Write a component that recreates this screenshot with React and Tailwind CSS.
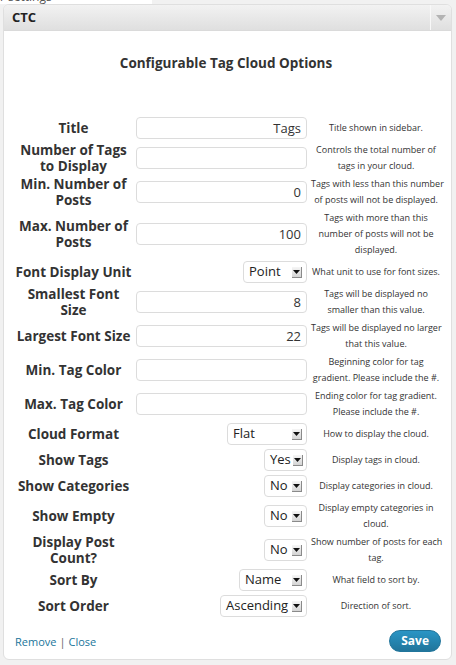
import React from "react";

const FONT = { fontFamily: '"Open Sans", "DejaVu Sans", sans-serif' };

const ROWS = [
  { label: ["Title"], input: "Tags", desc: ["Title shown in sidebar."] },
  { label: ["Number of Tags", "to Display"], input: "", desc: ["Controls the total number of", "tags in your cloud."] },
  { label: ["Min. Number of", "Posts"], input: "0", desc: ["Tags with less than this number", "of posts will not be displayed."] },
  { label: ["Max. Number of", "Posts"], input: "100", desc: ["Tags with more than this", "number of posts will not be", "displayed."] },
  { label: ["Font Display Unit"], select: "Point", w: "w-[64px]", desc: ["What unit to use for font sizes."] },
  { label: ["Smallest Font", "Size"], input: "8", desc: ["Tags will be displayed no", "smaller than this value."] },
  { label: ["Largest Font Size"], input: "22", desc: ["Tags will be displayed no larger", "that this value."] },
  { label: ["Min. Tag Color"], input: "", desc: ["Beginning color for tag", "gradient. Please include the #."] },
  { label: ["Max. Tag Color"], input: "", desc: ["Ending color for tag gradient.", "Please include the #."] },
  { label: ["Cloud Format"], select: "Flat", w: "w-[80px]", desc: ["How to display the cloud."] },
  { label: ["Show Tags"], select: "Yes", w: "w-[43px]", desc: ["Display tags in cloud."] },
  { label: ["Show Categories"], select: "No", w: "w-[43px]", desc: ["Display categories in cloud."] },
  { label: ["Show Empty"], select: "No", w: "w-[43px]", desc: ["Display empty categories in", "cloud."] },
  { label: ["Display Post", "Count?"], select: "No", w: "w-[43px]", desc: ["Show number of posts for each", "tag."] },
  { label: ["Sort By"], select: "Name", w: "w-[68px]", desc: ["What field to sort by."] },
  { label: ["Sort Order"], select: "Ascending", w: "w-[87px]", desc: ["Direction of sort."] },
];

function SelectBox({ value, w }) {
  return (
    <div className={`${w} h-[22px] my-[1px] flex items-center justify-between pl-[5px] pr-[4px] bg-white border border-[#dcdcdc] rounded-[4px] text-[13px] text-[#222]`}>
      <span className="whitespace-nowrap">{value}</span>
      <span className="w-[10px] h-[11px] ml-[2px] flex items-center justify-center bg-gradient-to-b from-[#f6f6f6] to-[#d4d4d4] border-r border-b border-[#8a8a8a] shrink-0">
        <svg width="7" height="4" viewBox="0 0 7 4"><path d="M0 0h7L3.5 4z" fill="#111" /></svg>
      </span>
    </div>
  );
}

export default function App() {
  return (
    <div className="relative min-h-[665px] bg-[#f1f1f1] pt-[4px] pl-[3px] pr-[4px] pb-[5px]" style={FONT}>
      {/* page behind the widget */}
      <div className="absolute left-0 top-0 w-[152px] h-[4px] bg-white" />
      <div className="absolute left-0 top-[-9px] text-[12px] leading-[12px] text-[#555]">r settings</div>

      <div className="relative bg-white border border-[#dfdfdf] rounded-[6px] overflow-hidden">
        {/* Header */}
        <div className="h-[26px] flex items-stretch bg-gradient-to-b from-[#f2f2f2] to-[#dfdfdf] border-b border-[#dadada]">
          <div className="flex-1 flex items-center pl-[8px] text-[13px] font-bold text-[#222]">CTC</div>
          <div className="w-[21px] flex items-center justify-center border-l border-[#f8f8f8]">
            <svg width="10" height="6" viewBox="0 0 10 6"><path d="M0 0h10L5 6z" fill="#b3b3b3" /></svg>
          </div>
        </div>

        {/* Body */}
        <div className="pl-[7px] pr-[10px]">
          <h2 className="pt-[24px] pb-[44px] text-center text-[13.5px] leading-[16px] font-bold text-[#333]">
            Configurable Tag Cloud Options
          </h2>

          <div className="grid grid-cols-[125px_171px_134px] items-center">
            {ROWS.map((r, i) => (
              <React.Fragment key={i}>
                <div className="py-[1px] text-center text-[13.5px] leading-[16px] font-bold text-[#333] whitespace-nowrap">
                  {r.label.map((l, j) => <div key={j}>{l}</div>)}
                </div>
                <div className="py-[1px] flex justify-end">
                  {r.select ? (
                    <SelectBox value={r.select} w={r.w} />
                  ) : (
                    <input
                      readOnly
                      value={r.input}
                      className="w-full h-[22px] my-[1px] px-[5px] text-right text-[13px] text-[#333] bg-white border border-[#dcdcdc] rounded-[4px] outline-none"
                    />
                  )}
                </div>
                <div className="py-[1px] pl-[4px] text-center text-[9px] leading-[16px] text-[#333] whitespace-nowrap">
                  {r.desc.map((d, j) => <div key={j}>{d}</div>)}
                </div>
              </React.Fragment>
            ))}
          </div>

          {/* Footer */}
          <div className="mt-[11px] pb-[7px] pl-[4px] flex items-center justify-between">
            <div className="mt-[3px] text-[11px] text-[#21759b]">
              <span>Remove</span>
              <span className="text-[#666] mx-[3px]">|</span>
              <span>Close</span>
            </div>
            <button className="h-[22px] px-[11px] rounded-full bg-gradient-to-b from-[#2a95c5] to-[#21759b] border border-[#21759b] text-white text-[12px] font-bold leading-none">
              Save
            </button>
          </div>
        </div>
      </div>
    </div>
  );
}
